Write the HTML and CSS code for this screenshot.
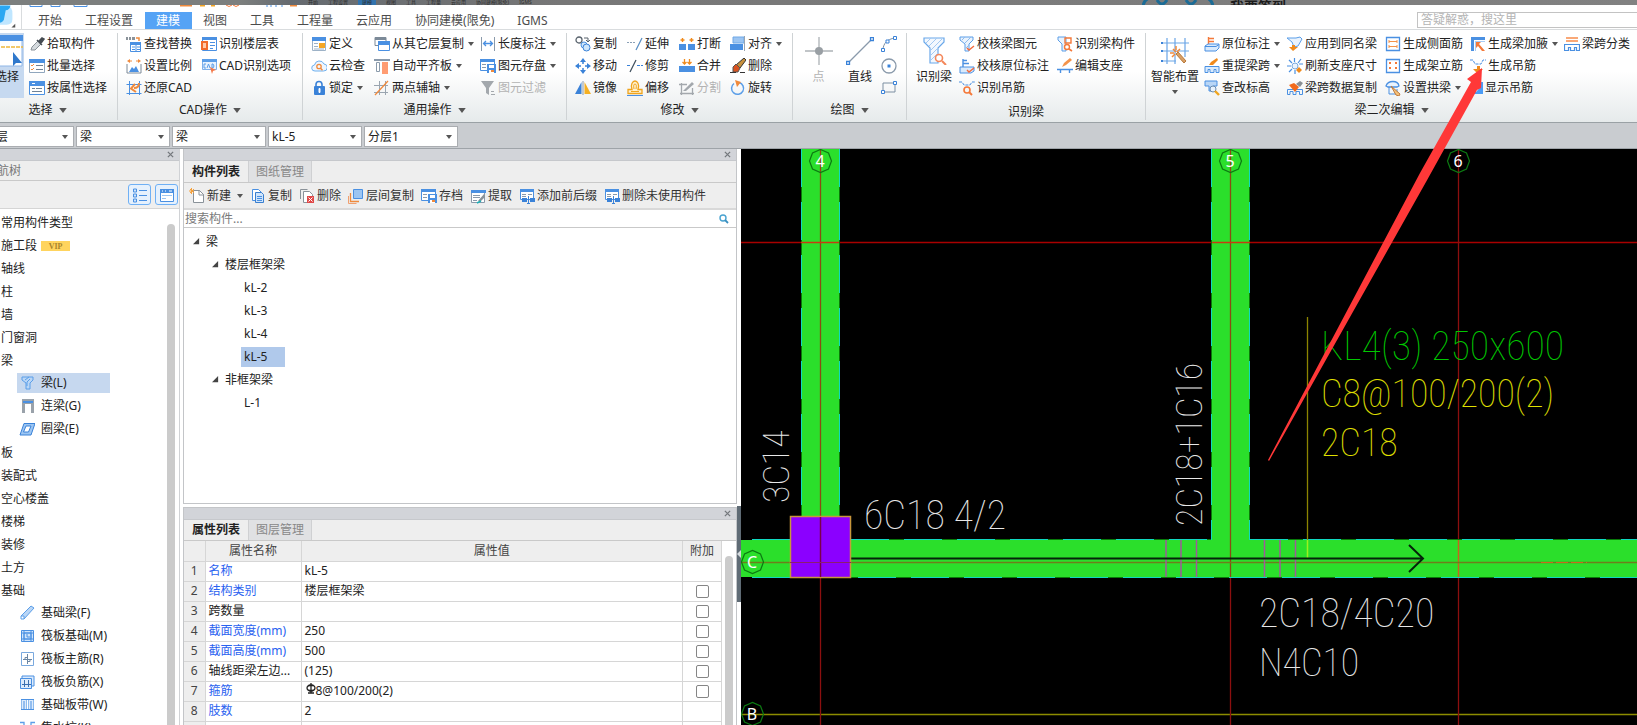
FILE: index.html
```html
<!DOCTYPE html>
<html lang="zh-CN">
<head>
<meta charset="utf-8">
<title>建模</title>
<link rel="stylesheet" href="styles.css">
</head>
<body>
<svg class="defs" aria-hidden="true">
  <defs>
    <symbol id="pick" viewBox="0 0 16 16"><path d="M2 14l1-3 6-6 3 3-6 6z" fill="#d5dade" stroke="#8a9299"/><path d="M8 4l5 5M10 5l3-3 2 1-3 4z" fill="#444b52" stroke="#444b52" stroke-width="1.5"/></symbol>
    <symbol id="batch" viewBox="0 0 16 16"><path d="M.5 1.500h15v13H.5z" fill="#fff" stroke="#8fa6bd"/><path d="M0 1h16v4H0z" fill="#4a90e2"/><path d="M2 7l1 1 2-2M2 11l1 1 2-2" fill="none" stroke="#f08a3c"/><path d="M7 7.500h7M7 11.500h7" stroke="#6f8296"/></symbol>
    <symbol id="prop" viewBox="0 0 16 16"><path d="M.5 2.500h15v12H.5z" fill="#fff" stroke="#4a90e2"/><path d="M0 1h16v5H0z" fill="#4a90e2"/><path d="M3 3h3v1H3z" fill="#fff"/><path d="M3 8.500h3M7 8.500h6M3 11.500h10" stroke="#6f8296"/></symbol>
    <symbol id="find" viewBox="0 0 16 16"><path d="M0 1h9v3H0z" fill="#8a9299"/><path d="M2.500 1v3M5.500 1v3" stroke="#fff"/><path d="M10 2h3v3" fill="none" stroke="#f08a3c" stroke-width="1.500"/><path d="M4.500 7.500h10v8h-10z" fill="#fff" stroke="#4a90e2"/><path d="M4 6h11v3H4z" fill="#4a90e2"/><path d="M6 11h3M6 13.500h3M11 11h3M11 13.500h3M10 9v6" stroke="#4a90e2"/></symbol>
    <symbol id="scale" viewBox="0 0 16 16"><path d="M1 6v9h14V6" fill="#fff" stroke="#7c8a98"/><path d="M3 14l3-5 2 2 2-3 3 6z" fill="#4a90e2"/><path d="M4 1L1 3l3 2zM12 1l3 2-3 2z" fill="#f08a3c"/><path d="M3 3h3M10 3h3" stroke="#f08a3c"/></symbol>
    <symbol id="restore" viewBox="0 0 16 16"><path d="M.5 4.500h15M.5 13.500h15M3.500 1v14M13.500 1v14" stroke="#4a90e2" fill="none"/><path d="M13 3c0 4-2 5-5 5M9 4L5 8.500l5 3.500" fill="none" stroke="#f08a3c" stroke-width="2"/></symbol>
    <symbol id="floor" viewBox="0 0 16 16"><path d="M1.500 2.500h14v12h-14z" fill="#fff" stroke="#4a90e2"/><path d="M1 1h15v3H1z" fill="#4a90e2"/><path d="M0 5h7v9H0z" fill="#f26a2a"/><path d="M2 7h3v5H2z" fill="#ffc9a8"/><path d="M9 6.500h5M9 9.500h5M9 12.500h3" stroke="#4a90e2"/></symbol>
    <symbol id="cad" viewBox="0 0 16 16"><path d="M1.500 2.500h14v9h-14z" fill="#e9f2fd" stroke="#7fb0ea"/><path d="M1 1h15v3H1z" fill="#5b9ee8"/><path d="M5 6H3v4h2M6 10l1.500-4L9 10M11 6v4h1q2-2 0-4z" fill="none" stroke="#5b9ee8"/><path d="M9 9l6 3-3 1-1 3z" fill="#f4794a"/></symbol>
    <symbol id="define" viewBox="0 0 16 16"><path d="M1.500 2.500h13v12h-13z" fill="#fff" stroke="#9db2c7"/><path d="M1 1h14v4H1z" fill="#4a90e2"/><path d="M8 7h6v5H8z" fill="#f5a623"/><path d="M3 7.500h4M3 10.500h4M3 13h10" stroke="#9db2c7"/></symbol>
    <symbol id="cloud" viewBox="0 0 16 16"><path d="M4 13a3 3 0 0 1-.5-6A5 5 0 0 1 13 6a3.500 3.500 0 0 1-.5 7z" fill="#eef6ff" stroke="#6fb0ee"/><circle cx="8" cy="8.500" r="2.200" fill="none" stroke="#f08a3c" stroke-width="1.300"/><path d="M9.500 10.200l2 2" stroke="#f08a3c" stroke-width="1.500"/></symbol>
    <symbol id="lock" viewBox="0 0 16 16"><path d="M5 7V4.500a3 3 0 0 1 6 0V7" fill="none" stroke="#3a82d8" stroke-width="1.600"/><rect x="3" y="6" width="11" height="9" rx="1" fill="#3a82d8"/><path d="M8 8.500h1v4H8z" fill="#fff" stroke="#fff"/></symbol>
    <symbol id="layers" viewBox="0 0 16 16"><path d="M1 1.500h11v8H1z" fill="#fff" stroke="#7c8a98"/><path d="M1 1h11v3H1z" fill="#7c8a98"/><path d="M4.500 6.500h11v8h-11z" fill="#fff" stroke="#4a90e2"/><path d="M4 5h12v4H4z" fill="#4a90e2"/></symbol>
    <symbol id="level" viewBox="0 0 16 16"><path d="M0 1h16v2H0z" fill="#8a9aab"/><path d="M2.500 4.500h3v9h-3z" fill="#fff" stroke="#8a9aab"/><path d="M8 4h6v12H8z" fill="#ff9c72"/></symbol>
    <symbol id="axis" viewBox="0 0 16 16"><path d="M0 5.500h14M0 12.500h14M5.500 1v14M11.500 1v14" stroke="#9aa5b0" fill="none"/><path d="M1 15L14 1" stroke="#f08a3c" stroke-width="1.300"/></symbol>
    <symbol id="length" viewBox="0 0 16 16"><path d="M1.500 1v14M14.500 1v14" stroke="#8a9aab"/><path d="M4 7.500h8M6 5L3.500 7.500 6 10M10 5l2.500 2.500L10 10" stroke="#4a90e2" fill="none" stroke-width="1.300"/></symbol>
    <symbol id="save" viewBox="0 0 16 16"><path d="M.5 2.500h14v10H.5z" fill="#fff" stroke="#4a90e2"/><path d="M0 1h15v3H0z" fill="#4a90e2"/><path d="M2 6.500h4M2 9.500h4" stroke="#8a9aab"/><path d="M7 6h9v9H7z" fill="#4a90e2"/><path d="M9 7h5v3H9z" fill="#fff"/><path d="M9 12h5v3H9z" fill="#fff"/><path d="M11 12h3v2h-3z" fill="#f08a3c"/></symbol>
    <symbol id="filter" viewBox="0 0 16 16"><path d="M1 1h13L9 8v7l-3-2V8z" fill="#a3a8ad"/><path d="M11 11.500h3M11 14.500h4" stroke="#a3a8ad"/></symbol>
    <symbol id="copy" viewBox="0 0 16 16"><circle cx="4" cy="4" r="3" fill="none" stroke="#59636d" stroke-width="1.300"/><path d="M9 2h4v4M11 4l2 2 2-2" fill="none" stroke="#59636d"/><circle cx="9" cy="9" r="3" fill="#cfe6fb" stroke="#4a90e2"/><circle cx="11.500" cy="11.500" r="3.500" fill="#cfe6fb" stroke="#3a82d8"/></symbol>
    <symbol id="move" viewBox="0 0 16 16"><path d="M8 0l3 4H5zM8 16l3-4H5zM0 8l4-3v6zM16 8l-4-3v6z" fill="#3a82d8"/><path d="M8 4v2M8 10v2M4 8h2M10 8h2" stroke="#3a82d8" stroke-width="1.500"/></symbol>
    <symbol id="mirror" viewBox="0 0 16 16"><path d="M6.500 2v12H0z" fill="#3a82d8"/><path d="M9.500 2v12H16z" fill="#f5b023"/><path d="M8 1v14" stroke="#8a9aab"/></symbol>
    <symbol id="extend" viewBox="0 0 16 16"><path d="M0 6.500h9" stroke="#8aa0b6" stroke-dasharray="2 1"/><path d="M9 14l6-12" stroke="#5b8fc4" stroke-width="1.300"/></symbol>
    <symbol id="trim" viewBox="0 0 16 16"><path d="M0 7.500h4M10 7.500h6" stroke="#3a82d8" stroke-dasharray="3 1"/><path d="M3 14L9 2" stroke="#41505e" stroke-width="1.300"/></symbol>
    <symbol id="offset" viewBox="0 0 16 16"><path d="M1 13.500v-4h4C3 4 6 1 8 1s5 3 3 8.500h4v4z" fill="#fff1cf" stroke="#f0a51e" stroke-width="1.300"/><path d="M4 11.500h8M7 9q-1-5 1-5t1 5" fill="none" stroke="#f0a51e"/><path d="M0 15.500h16" stroke="#4a90e2"/></symbol>
    <symbol id="break" viewBox="0 0 16 16"><path d="M0 8h7v6H0zM9 8h7v6H9z" fill="#4a90e2"/><path d="M3.500 6V2M1.500 4h4M12.500 6V2M10.500 4h4" stroke="#f08a1c" stroke-width="1.400"/></symbol>
    <symbol id="merge" viewBox="0 0 16 16"><path d="M0 8h16v6H0z" fill="#4a90e2"/><path d="M5.500 1v5M3.500 4l2 2 2-2M10.500 1v5M8.500 4l2 2 2-2" stroke="#f08a1c" stroke-width="1.300" fill="none"/></symbol>
    <symbol id="split" viewBox="0 0 16 16"><path d="M0 4.500h8M1 13.500h14M2.500 3v12M13.500 8v7" stroke="#a3a8ad" stroke-width="1.300"/><path d="M4 11L13 2l2 2-8 7z" fill="#a3a8ad"/></symbol>
    <symbol id="align" viewBox="0 0 16 16"><path d="M3 1h11v6H3z" fill="#9cc5f2" stroke="#6fa8e6"/><path d="M0 8h13v6H0z" fill="#4a90e2"/><path d="M14.500 0v15" stroke="#9aa5b0"/></symbol>
    <symbol id="erase" viewBox="0 0 16 16"><path d="M14 0l2 2-6 8-4-3z" fill="#c8903c" stroke="#333"/><path d="M6 6l4 4-2 4-5 0 0-5z" fill="#d8521e" stroke="#555"/><path d="M0 14.500h6M10 14.500h5" stroke="#333"/></symbol>
    <symbol id="rotate" viewBox="0 0 16 16"><path d="M9 2.500a6 6 0 1 1-5 1" fill="none" stroke="#5b9ee8" stroke-width="1.500"/><path d="M5 0l6 2-4 5z" fill="#f08a3c"/></symbol>
    <symbol id="point" viewBox="0 0 28 28"><path d="M0 14h28M14 0v28" stroke="#adb2b6" stroke-width="1.300"/><circle cx="14" cy="14" r="4" fill="#999fa4"/></symbol>
    <symbol id="line" viewBox="0 0 28 28"><path d="M2 26L26 2" stroke="#8a9aab" stroke-width="1.300"/><path d="M.5 24.500h3v3h-3zM24.500.5h3v3h-3z" fill="#fff" stroke="#3a82d8" stroke-width="1.300"/></symbol>
    <symbol id="arc" viewBox="0 0 16 16"><path d="M2 14C2 8 6 3 14 2" fill="none" stroke="#7c8fa2"/><path d="M.5 12.500h3v3h-3zM5 4h3v3H5zM12.500.5h3v3h-3z" fill="#fff" stroke="#3a82d8"/></symbol>
    <symbol id="circle" viewBox="0 0 16 16"><circle cx="8" cy="8" r="7" fill="none" stroke="#8a9aab" stroke-width="1.300"/><path d="M6.500 6.500h3v3h-3z" fill="#3a82d8"/></symbol>
    <symbol id="rect" viewBox="0 0 16 16"><path d="M2 3h12v9H2z" fill="none" stroke="#7c8fa2"/><path d="M.5 10.500h3v3h-3zM12.500 1.500h3v3h-3z" fill="#fff" stroke="#3a82d8"/></symbol>
    <symbol id="beam" viewBox="0 0 28 28"><path d="M4 1h20v4l-6 6v15h-8V11L4 5z" fill="#f3f8fe" stroke="#6aa8ea" stroke-width="1.200"/><path d="M6 6l5-5M9 9l8-8M11 13L22 2M11 18l7-7M11 23l7-7" stroke="#a3c9f2"/><circle cx="19" cy="21" r="3.500" fill="#fff" stroke="#f4875a" stroke-width="1.600"/><path d="M22 24l4 4" stroke="#f4875a" stroke-width="2"/></symbol>
    <symbol id="beamcheck" viewBox="0 0 16 16"><path d="M1 1h13v3l-4 4v7H6V8L1 4z" fill="#eaf3fd" stroke="#5b9ee8"/><path d="M3 4l3-3M6 7l6-6M7 12l3-3" stroke="#8dbbee"/><path d="M8 12l2 2 5-4" fill="none" stroke="#f4693a" stroke-width="1.400"/></symbol>
    <symbol id="notecheck" viewBox="0 0 16 16"><path d="M4 1v8M4 2.500h4M4 5.500h6" stroke="#4a90e2" stroke-width="1.400"/><path d="M1 9h9l5 0v4l-3 2H1z" fill="#d9eafc" stroke="#4a90e2"/><path d="M8 12l2 2 5-4" fill="none" stroke="#f4693a" stroke-width="1.400"/></symbol>
    <symbol id="hangfind" viewBox="0 0 16 16"><path d="M0 2h3l2 3h6l2-3h3" fill="none" stroke="#4a90e2" stroke-dasharray="3 1"/><circle cx="8" cy="10" r="3" fill="none" stroke="#f4793a" stroke-width="1.600"/><path d="M10 12l3 3" stroke="#f4793a" stroke-width="2"/></symbol>
    <symbol id="beampart" viewBox="0 0 16 16"><path d="M1 1h8v14H5V8L1 4z" fill="#eaf3fd" stroke="#5b9ee8"/><path d="M8 2h6v5H8z" fill="none" stroke="#f4793a" stroke-width="1.400"/><circle cx="10" cy="11" r="2.500" fill="#fff" stroke="#f4793a" stroke-width="1.400"/><path d="M12 13l3 2" stroke="#f4793a" stroke-width="1.600"/></symbol>
    <symbol id="support" viewBox="0 0 16 16"><path d="M0 11.500h16M3.500 11v4M12.500 11v4" stroke="#4a90e2" stroke-width="1.400"/><path d="M5 9l2-4 6-5 2 2-6 5z" fill="#f4934a"/></symbol>
    <symbol id="smart" viewBox="0 0 28 28"><path d="M1 6h27M1 14h27M1 24h14M6 1v26M14 1v26M24 1v19" stroke="#6aa5e6" stroke-width="1.200"/><path d="M0 5h2v2H0zM0 13h2v2H0zM0 23h2v2H0z" fill="#3a82d8"/><path d="M12 12l3 3M15 9v4M9 16h4M11 20l3-3M19 12l-3 3" stroke="#f08a3c" stroke-width="1.500"/><path d="M15 17l2-2 8 9-2 2z" fill="#d9a066" stroke="#b87a3c"/></symbol>
    <symbol id="note" viewBox="0 0 16 16"><path d="M4.500 1v9M5 2.500h5M5 5.500h5" stroke="#f4793a" stroke-width="1.400"/><path d="M1 10l3-2h11v4l-3 3H1z" fill="#d9eafc" stroke="#4a90e2"/><path d="M1 10.500h11l3-2" fill="none" stroke="#4a90e2"/></symbol>
    <symbol id="respan" viewBox="0 0 16 16"><path d="M1 8.500h14v6h-3v-3h-2v3H6v-3H4v3H1z" fill="#d9eafc" stroke="#4a90e2"/><path d="M5 7l2-3 6-4 1 2-5 5z" fill="#f08a1c"/></symbol>
    <symbol id="height" viewBox="0 0 16 16"><path d="M1 1h12v5H9v5H5V6H1z" fill="#b9d6f6" stroke="#4a90e2"/><circle cx="9" cy="9" r="3" fill="#e8f2fd" stroke="#6b8db0"/><path d="M11 11l4 4" stroke="#f0a51e" stroke-width="2.400"/></symbol>
    <symbol id="apply" viewBox="0 0 16 16"><path d="M0 2h9l4-1 2 2-4 7-4 1-2-5z" fill="#eaf3fd" stroke="#5b9ee8"/><path d="M5 9h3v2h3l-5 4-4-4h3z" fill="#f08a1c"/></symbol>
    <symbol id="refresh" viewBox="0 0 16 16"><path d="M7.500 0v4M8 12v4M0 8h4M12 6h4M2 2l3 3M14 1l-3 4M2 14l3-3" stroke="#4a90e2" stroke-width="1.200"/><circle cx="8" cy="8" r="3" fill="#eaf3fd" stroke="#7aa9de"/><path d="M12 9l3 3-3 3-3-3z" fill="#f08a1c"/></symbol>
    <symbol id="spancopy" viewBox="0 0 16 16"><path d="M.5 9.500h15v5h-3v-3H9v3H6v-3H3v3H.5z" fill="none" stroke="#4a90e2"/><path d="M9 4l4-3 3 2-3 4z" fill="#8a8f94"/><path d="M2 5l5-2 5 4-4 5z" fill="#f26a1c"/></symbol>
    <symbol id="side" viewBox="0 0 16 16"><path d="M1.500 1.500h13v13h-13z" fill="#fff" stroke="#4a90e2" stroke-width="1.300"/><path d="M4 5.500h8M4 10.500h8M4 4v3M12 4v3M4 9v3M12 9v3" stroke="#f4934a"/></symbol>
    <symbol id="frame" viewBox="0 0 16 16"><path d="M1.500 1.500h13v13h-13z" fill="#fff" stroke="#4a90e2" stroke-width="1.300"/><path d="M4 4h2v2H4zM10 4h2v2h-2zM4 9h2v2H4zM10 9h2v2h-2z" fill="#f4793a"/></symbol>
    <symbol id="arch" viewBox="0 0 16 16"><path d="M1 6c2-6 12-6 13 0l-2 1H3z" fill="#eaf3fd" stroke="#4a90e2" stroke-width="1.300"/><path d="M4 7v7h8V9" fill="none" stroke="#4a90e2"/><path d="M6 6l9 8-1 2-3-1z" fill="#f4c27a" stroke="#c07a3c"/></symbol>
    <symbol id="haunch" viewBox="0 0 16 16"><path d="M1 1h14v3H4v11H1z" fill="#4a90e2"/><path d="M6 6h5L9 8l6 7h-3L8 10l-2 2z" fill="#f4793a"/><path d="M5.500 5v10M5 5.500h10" stroke="#a9cdf4"/></symbol>
    <symbol id="hang" viewBox="0 0 16 16"><path d="M0 2h3l2 4h6l2-4h3" fill="none" stroke="#4a90e2" stroke-dasharray="3 1"/><path d="M7 8h3v3h3l-5 5-5-5h4z" fill="#f08a1c"/></symbol>
    <symbol id="show" viewBox="0 0 16 16"><path d="M0 0h16v16H0z" fill="#4a9bf5"/><path d="M4 9l3 3 6-7" fill="none" stroke="#fff" stroke-width="1.500"/></symbol>
    <symbol id="classify" viewBox="0 0 16 16"><path d="M2 1h12v2H2zM2 4h12v2H2z" fill="#f9a877"/><path d="M0 8.500h15.500v6h-3v-3h-2v3h-4v-3h-2v3H.5v-6" fill="none" stroke="#4a90e2" stroke-width="1.200"/></symbol>
    <symbol id="new" viewBox="0 0 16 16"><path d="M4.500 2.500h6l4 4v8h-10z" fill="#fff" stroke="#8a9299"/><path d="M10 2v5h5" fill="none" stroke="#8a9299"/><path d="M2.500 0v6M0 3h5M1 1l4 4M5 1L1 5" stroke="#f5a13c"/></symbol>
    <symbol id="pages" viewBox="0 0 16 16"><path d="M2.500 1.500h6l3 3v8h-9z" fill="#fff" stroke="#4a90e2"/><path d="M5.500 4.500h6l2 2v8h-8z" fill="#cfe4fb" stroke="#3a7fcf"/><path d="M7 8.500h5M7 10.500h5M7 12.500h5" stroke="#4a90e2"/></symbol>
    <symbol id="pagedel" viewBox="0 0 16 16"><path d="M1.500 11V1.500h7" fill="none" stroke="#8a9299"/><path d="M4.500 3.500h6l3 3v8h-9z" fill="#fff" stroke="#8a9299"/><path d="M8 8h7v7H8z" fill="#e04848"/><path d="M9.500 9.500l4 4M13.500 9.500l-4 4" stroke="#fff"/></symbol>
    <symbol id="floorcopy" viewBox="0 0 16 16"><path d="M2.500 5v8.500H11" fill="none" stroke="#f08a3c" stroke-width="1.300"/><path d="M.5 8v7.500h8" fill="none" stroke="#f0a070"/><path d="M5.500 1.500h9v9h-9z" fill="#9cc5f2" stroke="#4a90e2"/></symbol>
    <symbol id="extract" viewBox="0 0 16 16"><path d="M1.500 3.500h13v11h-13z" fill="#fff" stroke="#8a9aab"/><path d="M1 2h15v3H1z" fill="#4a90e2"/><path d="M3 7.500h7M3 9.500h7M3 12.500h4" stroke="#8a9aab"/><path d="M8 13l6-7 1 3-5 5z" fill="#8a9299"/><path d="M7 15l4-2" stroke="#1fb0b8" stroke-width="1.500"/></symbol>
    <symbol id="affix" viewBox="0 0 16 16"><path d="M1.500 2.500h13v9h-13z" fill="#fff" stroke="#4a90e2"/><path d="M1 1h14v3H1z" fill="#4a90e2"/><path d="M3 6.500h4M9 6.500h4M3 8.500h4" stroke="#8a9aab"/><path d="M3 10h5v4H3zM11 10h5v4h-5z" fill="#3a82d8"/><path d="M9.500 8v7M8 15.500h3" stroke="#3a82d8"/></symbol>
    <symbol id="tbeam" viewBox="0 0 16 16"><path d="M3 2h11v3l-3 3v6H7V8L3 5z" fill="#b9d6f6" stroke="#5b9ee8"/><path d="M6 5l4-3M8 11V7l3-3" stroke="#5b9ee8" fill="none"/></symbol>
    <symbol id="tlink" viewBox="0 0 16 16"><path d="M3 1h12v14h-3V6H6v9H3z" fill="#9aa2aa"/><path d="M4 3h10v2H4z" fill="#4a90e2"/></symbol>
    <symbol id="tring" viewBox="0 0 16 16"><path d="M5 2.500h11L12 14H1z" fill="#9cc5f2" stroke="#3a82d8"/><path d="M7 5h5l-2.500 6H4.500z" fill="#fff" stroke="#3a82d8"/></symbol>
    <symbol id="tfound" viewBox="0 0 16 16"><path d="M2 11L12 1l3 2L5 14z" fill="#b9d6f6" stroke="#5b9ee8"/><path d="M2 11h3v3H2z" fill="#fff" stroke="#5b9ee8"/></symbol>
    <symbol id="traft" viewBox="0 0 16 16"><path d="M2.500 2.500h12v11h-12z" fill="#cfe4fb" stroke="#4a90e2"/><path d="M5 5h7v6H5zM5 2v12M12 2v12M2 5h13M2 11h13M8 6v3h3" fill="none" stroke="#4a90e2"/></symbol>
    <symbol id="tmain" viewBox="0 0 16 16"><path d="M2.500 1.500h12v13h-12z" fill="#fff" stroke="#7aa9de"/><path d="M8.500 3v10M4 8.500h9M6 8.500v-2h2M11 8.500v2H9" fill="none" stroke="#6b86a3"/></symbol>
    <symbol id="tneg" viewBox="0 0 16 16"><path d="M1.500 4.500h11v10h-11zM3 4V2h12v10h-2" fill="#dcebfc" stroke="#4a90e2"/><path d="M5.500 6v7M9.500 6v7M3 10.500h9" stroke="#3a6fb0"/></symbol>
    <symbol id="tband" viewBox="0 0 16 16"><path d="M2.500 2.500h5v10h-5zM9.500 2.500h5v10h-5z" fill="#dcebfc" stroke="#8dbbee"/><path d="M2 2.500h13M2 12.500h13M5 4v8M12 4v8" stroke="#4a90e2"/></symbol>
    <symbol id="tpit" viewBox="0 0 16 16"><path d="M1 2.500h4v10h7v-10h4" fill="none" stroke="#5b9ee8" stroke-width="1.300"/></symbol>
    <symbol id="sel" viewBox="0 0 32 32"><path d="M0 1h31v30H0z" fill="#fff" stroke="#8fb6e6"/><path d="M0 0h32v6H0z" fill="#4a90e2"/><path d="M0 12h32" stroke="#f0b83c" stroke-width="1.500" stroke-dasharray="4 1"/><path d="M22 17v14l3-3 6 0z" fill="#2f78cc"/></symbol>
    <symbol id="caret" viewBox="0 0 6 4"><path d="M0 0h6L3 4z" fill="#555"/></symbol>
    <symbol id="close" viewBox="0 0 8 8"><path d="M1 1l6 6M7 1L1 7" stroke="#74787c" stroke-width="1.500"/></symbol>
    <symbol id="twist" viewBox="0 0 8 8"><path d="M7 0v7H0z" fill="#444"/></symbol>
    <symbol id="mag" viewBox="0 0 10 10"><circle cx="4" cy="4" r="3" fill="none" stroke="#4aa3d0" stroke-width="1.400"/><path d="M6 6l3 3" stroke="#3a8fc0" stroke-width="1.800"/></symbol>
  </defs>
</svg>

<div class="app">
  <div class="backdrop" aria-hidden="true">
    <div class="ghost-tabs"><span>开始</span><span>工程设置</span><span class="ghost-on">建模</span><span>视图</span><span>工具</span><span>工程量</span><span>云应用</span><span>协同建模(限免)</span><span>IGMS</span></div>
    <svg class="ghost-face" viewBox="0 0 72 6"><path d="M1 6q1-6 6-8M71 6q-1-6-6-8" fill="none" stroke="#1c6c96" stroke-width="3"/><path d="M15 0q5 8 10 0M44 0q5 8 10 0" fill="none" stroke="#1c6c96" stroke-width="3"/></svg>
    <span class="ghost-sign">我要签到</span>
  </div>

  <header class="menubar">
    <svg class="logo" viewBox="0 0 22 25" aria-hidden="true"><path d="M0 0h8q5 2 5 8v6q0 6-6 6H0z" fill="#bfe6ff"/><path d="M0 0h11q-1 5-5 5l-2 10q-2 3-4 3z" fill="#2aa7f2"/><path d="M16 19v4h-4z" fill="#555"/></svg>
    <nav class="tabs">
      <button>开始</button><button>工程设置</button><button class="on">建模</button><button>视图</button><button>工具</button><button>工程量</button><button>云应用</button><button>协同建模(限免)</button><button>IGMS</button>
    </nav>
    <svg class="quick" viewBox="0 0 300 3" aria-hidden="true"><path d="M8 0v1.500h12V0M29 0v1.500h9V0M52 0v1.500h13V0" fill="none" stroke="#4a90e2"/><path d="M158 .5h12" stroke="#f08a3c" stroke-width="2"/><path d="M178 .5h5M189 .5h4" stroke="#f5a623" stroke-width="2"/><path d="M204 0q3 3 6 0M211 0q3 3 6 0" fill="none" stroke="#f4793a"/><path d="M245 0v2M249 0v2M254 0v2M260 0v2" stroke="#4a90e2"/><path d="M268 .5h7" stroke="#f08a3c" stroke-width="2"/></svg>
    <input class="ask" type="text" placeholder="答疑解惑，搜这里" aria-label="答疑解惑">
  </header>

  <section class="ribbon">
    <div class="group g-select">
      <div class="tools">
        <button class="big active"><svg class="ic32"><use href="#sel"/></svg>选择</button>
        <div class="col">
          <button><svg class="ic"><use href="#pick"/></svg>拾取构件</button>
          <button><svg class="ic"><use href="#batch"/></svg>批量选择</button>
          <button><svg class="ic"><use href="#prop"/></svg>按属性选择</button>
        </div>
      </div>
      <div class="caption">选择<svg class="car"><use href="#caret"/></svg></div>
    </div>
    <div class="group g-cad">
      <div class="tools">
        <div class="col">
          <button><svg class="ic"><use href="#find"/></svg>查找替换</button>
          <button><svg class="ic"><use href="#scale"/></svg>设置比例</button>
          <button><svg class="ic"><use href="#restore"/></svg>还原CAD</button>
        </div>
        <div class="col">
          <button><svg class="ic"><use href="#floor"/></svg>识别楼层表</button>
          <button><svg class="ic"><use href="#cad"/></svg>CAD识别选项</button>
        </div>
      </div>
      <div class="caption">CAD操作<svg class="car"><use href="#caret"/></svg></div>
    </div>
    <div class="group g-common">
      <div class="tools">
        <div class="col">
          <button><svg class="ic"><use href="#define"/></svg>定义</button>
          <button><svg class="ic"><use href="#cloud"/></svg>云检查</button>
          <button><svg class="ic"><use href="#lock"/></svg>锁定<svg class="car"><use href="#caret"/></svg></button>
        </div>
        <div class="col">
          <button><svg class="ic"><use href="#layers"/></svg>从其它层复制<svg class="car"><use href="#caret"/></svg></button>
          <button><svg class="ic"><use href="#level"/></svg>自动平齐板<svg class="car"><use href="#caret"/></svg></button>
          <button><svg class="ic"><use href="#axis"/></svg>两点辅轴<svg class="car"><use href="#caret"/></svg></button>
        </div>
        <div class="col">
          <button><svg class="ic"><use href="#length"/></svg>长度标注<svg class="car"><use href="#caret"/></svg></button>
          <button><svg class="ic"><use href="#save"/></svg>图元存盘<svg class="car"><use href="#caret"/></svg></button>
          <button disabled><svg class="ic"><use href="#filter"/></svg>图元过滤</button>
        </div>
      </div>
      <div class="caption">通用操作<svg class="car"><use href="#caret"/></svg></div>
    </div>
    <div class="group g-modify">
      <div class="tools">
        <div class="col">
          <button><svg class="ic"><use href="#copy"/></svg>复制</button>
          <button><svg class="ic"><use href="#move"/></svg>移动</button>
          <button><svg class="ic"><use href="#mirror"/></svg>镜像</button>
        </div>
        <div class="col">
          <button><svg class="ic"><use href="#extend"/></svg>延伸</button>
          <button><svg class="ic"><use href="#trim"/></svg>修剪</button>
          <button><svg class="ic"><use href="#offset"/></svg>偏移</button>
        </div>
        <div class="col">
          <button><svg class="ic"><use href="#break"/></svg>打断</button>
          <button><svg class="ic"><use href="#merge"/></svg>合并</button>
          <button disabled><svg class="ic"><use href="#split"/></svg>分割</button>
        </div>
        <div class="col">
          <button><svg class="ic"><use href="#align"/></svg>对齐<svg class="car"><use href="#caret"/></svg></button>
          <button><svg class="ic"><use href="#erase"/></svg>删除</button>
          <button><svg class="ic"><use href="#rotate"/></svg>旋转</button>
        </div>
      </div>
      <div class="caption">修改<svg class="car"><use href="#caret"/></svg></div>
    </div>
    <div class="group g-draw">
      <div class="tools">
        <button class="big" disabled><svg class="ic28"><use href="#point"/></svg>点</button>
        <button class="big"><svg class="ic28"><use href="#line"/></svg>直线</button>
        <div class="col">
          <button aria-label="弧线"><svg class="ic"><use href="#arc"/></svg></button>
          <button aria-label="圆"><svg class="ic"><use href="#circle"/></svg></button>
          <button aria-label="矩形"><svg class="ic"><use href="#rect"/></svg></button>
        </div>
      </div>
      <div class="caption">绘图<svg class="car"><use href="#caret"/></svg></div>
    </div>
    <div class="group g-ident">
      <div class="tools">
        <button class="big"><svg class="ic28"><use href="#beam"/></svg>识别梁</button>
        <div class="col">
          <button><svg class="ic"><use href="#beamcheck"/></svg>校核梁图元</button>
          <button><svg class="ic"><use href="#notecheck"/></svg>校核原位标注</button>
          <button><svg class="ic"><use href="#hangfind"/></svg>识别吊筋</button>
        </div>
        <div class="col">
          <button><svg class="ic"><use href="#beampart"/></svg>识别梁构件</button>
          <button><svg class="ic"><use href="#support"/></svg>编辑支座</button>
        </div>
      </div>
      <div class="caption">识别梁</div>
    </div>
    <div class="group g-second">
      <div class="tools">
        <button class="big"><svg class="ic28"><use href="#smart"/></svg>智能布置<svg class="car"><use href="#caret"/></svg></button>
        <div class="col">
          <button><svg class="ic"><use href="#note"/></svg>原位标注<svg class="car"><use href="#caret"/></svg></button>
          <button><svg class="ic"><use href="#respan"/></svg>重提梁跨<svg class="car"><use href="#caret"/></svg></button>
          <button><svg class="ic"><use href="#height"/></svg>查改标高</button>
        </div>
        <div class="col">
          <button><svg class="ic"><use href="#apply"/></svg>应用到同名梁</button>
          <button><svg class="ic"><use href="#refresh"/></svg>刷新支座尺寸</button>
          <button><svg class="ic"><use href="#spancopy"/></svg>梁跨数据复制</button>
        </div>
        <div class="col">
          <button><svg class="ic"><use href="#side"/></svg>生成侧面筋</button>
          <button><svg class="ic"><use href="#frame"/></svg>生成架立筋</button>
          <button><svg class="ic"><use href="#arch"/></svg>设置拱梁<svg class="car"><use href="#caret"/></svg></button>
        </div>
        <div class="col">
          <button><svg class="ic"><use href="#haunch"/></svg>生成梁加腋<svg class="car"><use href="#caret"/></svg></button>
          <button><svg class="ic"><use href="#hang"/></svg>生成吊筋</button>
          <button class="tick"><svg class="ic12"><use href="#show"/></svg>显示吊筋</button>
        </div>
        <div class="col">
          <button><svg class="ic"><use href="#classify"/></svg>梁跨分类</button>
        </div>
      </div>
      <div class="caption">梁二次编辑<svg class="car"><use href="#caret"/></svg></div>
    </div>
  </section>

  <section class="pickers">
    <label class="combo"><select aria-label="楼层"><option>首层</option></select></label>
    <label class="combo"><select aria-label="构件大类"><option>梁</option></select></label>
    <label class="combo"><select aria-label="构件类型"><option>梁</option></select></label>
    <label class="combo"><select aria-label="构件"><option>kL-5</option></select></label>
    <label class="combo"><select aria-label="分层"><option>分层1</option></select></label>
  </section>

  <main class="work">
    <aside class="nav">
      <div class="strip"><button aria-label="关闭"><svg class="x"><use href="#close"/></svg></button></div>
      <h2 class="navtitle"><span>导航树</span></h2>
      <div class="navtools">
        <button aria-label="列表视图"><svg viewBox="0 0 16 16"><path d="M1.500 2h3v3h-3zM1.500 7h3v3h-3zM1.500 12h3v3h-3z" fill="#cfe4fb" stroke="#4a90e2"/><path d="M7 3.500h8M7 8.500h8M7 13.500h8" stroke="#4a90e2"/></svg></button>
        <button aria-label="窗口视图"><svg viewBox="0 0 16 16"><path d="M1.500 2.500h13v12h-13z" fill="#fff" stroke="#4a90e2"/><path d="M1 2h14v4H1z" fill="#4a90e2"/><path d="M3 4h1M6 4h1M10 4h3" stroke="#fff"/><path d="M3 8.500h10M3 11.500h4" stroke="#9cc5f2"/></svg></button>
      </div>
      <div class="navbody">
        <ul class="cats">
          <li>常用构件类型</li>
          <li>施工段<span class="vip">VIP</span></li>
          <li>轴线</li><li>柱</li><li>墙</li><li>门窗洞</li><li>梁</li>
          <li class="sub on"><svg class="ic"><use href="#tbeam"/></svg>梁(L)</li>
          <li class="sub"><svg class="ic"><use href="#tlink"/></svg>连梁(G)</li>
          <li class="sub"><svg class="ic"><use href="#tring"/></svg>圈梁(E)</li>
          <li>板</li><li>装配式</li><li>空心楼盖</li><li>楼梯</li><li>装修</li><li>土方</li><li>基础</li>
          <li class="sub"><svg class="ic"><use href="#tfound"/></svg>基础梁(F)</li>
          <li class="sub"><svg class="ic"><use href="#traft"/></svg>筏板基础(M)</li>
          <li class="sub"><svg class="ic"><use href="#tmain"/></svg>筏板主筋(R)</li>
          <li class="sub"><svg class="ic"><use href="#tneg"/></svg>筏板负筋(X)</li>
          <li class="sub"><svg class="ic"><use href="#tband"/></svg>基础板带(W)</li>
          <li class="sub"><svg class="ic"><use href="#tpit"/></svg>集水坑(K)</li>
        </ul>
        <div class="track"><div class="thumb"></div></div>
      </div>
    </aside>

    <div class="side">
      <section class="parts">
        <div class="strip"><button aria-label="关闭"><svg class="x"><use href="#close"/></svg></button></div>
        <div class="ptabs"><button class="on">构件列表</button><button>图纸管理</button></div>
        <div class="ptools">
          <button><svg class="ic"><use href="#new"/></svg>新建<svg class="car"><use href="#caret"/></svg></button>
          <button><svg class="ic"><use href="#pages"/></svg>复制</button>
          <button><svg class="ic"><use href="#pagedel"/></svg>删除</button>
          <button><svg class="ic"><use href="#floorcopy"/></svg>层间复制</button>
          <button><svg class="ic"><use href="#save"/></svg>存档</button>
          <button><svg class="ic"><use href="#extract"/></svg>提取</button>
          <button><svg class="ic"><use href="#affix"/></svg>添加前后缀</button>
          <button><svg class="ic"><use href="#affix"/></svg>删除未使用构件</button>
        </div>
        <div class="search"><input type="text" placeholder="搜索构件..." aria-label="搜索构件"><svg class="magic"><use href="#mag"/></svg></div>
        <ul class="tree">
          <li><svg class="tw"><use href="#twist"/></svg>梁</li>
          <li class="l2"><svg class="tw"><use href="#twist"/></svg>楼层框架梁</li>
          <li class="l3"><span>kL-2</span></li>
          <li class="l3"><span>kL-3</span></li>
          <li class="l3"><span>kL-4</span></li>
          <li class="l3"><span class="on">kL-5</span></li>
          <li class="l2"><svg class="tw"><use href="#twist"/></svg>非框架梁</li>
          <li class="l3"><span>L-1</span></li>
        </ul>
      </section>
      <section class="props">
        <div class="strip"><button aria-label="关闭"><svg class="x"><use href="#close"/></svg></button></div>
        <div class="ptabs"><button class="on">属性列表</button><button>图层管理</button></div>
        <div class="gridwrap">
          <table>
            <colgroup><col class="c-no"><col class="c-name"><col><col class="c-add"></colgroup>
            <thead><tr><th></th><th>属性名称</th><th>属性值</th><th>附加</th></tr></thead>
            <tbody>
              <tr><th>1</th><td class="key">名称</td><td>kL-5</td><td></td></tr>
              <tr><th>2</th><td class="key">结构类别</td><td>楼层框架梁</td><td class="ck"><input type="checkbox" aria-label="附加 结构类别"></td></tr>
              <tr><th>3</th><td>跨数量</td><td></td><td class="ck"><input type="checkbox" aria-label="附加 跨数量"></td></tr>
              <tr><th>4</th><td class="key">截面宽度(mm)</td><td>250</td><td class="ck"><input type="checkbox" aria-label="附加 截面宽度"></td></tr>
              <tr><th>5</th><td class="key">截面高度(mm)</td><td>500</td><td class="ck"><input type="checkbox" aria-label="附加 截面高度"></td></tr>
              <tr><th>6</th><td>轴线距梁左边...</td><td>(125)</td><td class="ck"><input type="checkbox" aria-label="附加 轴线距梁左边"></td></tr>
              <tr><th>7</th><td class="key">箍筋</td><td><svg class="rebar" viewBox="0 0 10 12"><ellipse cx="5" cy="5" rx="4" ry="3" fill="none" stroke="#222" stroke-width="1.300"/><path d="M5 0v10M2 10h6M2.500 2.500h5M3 7.500h4" stroke="#222" stroke-width="1.300"/></svg>8@100/200(2)</td><td class="ck"><input type="checkbox" aria-label="附加 箍筋"></td></tr>
              <tr><th>8</th><td class="key">肢数</td><td>2</td><td></td></tr>
              <tr><th>9</th><td></td><td></td><td></td></tr>
            </tbody>
          </table>
          <div class="track"><div class="thumb"></div></div>
        </div>
      </section>
    </div>

    <div class="gutter"><button aria-label="收起面板"><svg viewBox="0 0 4 8"><path d="M4 0v8L0 4z" fill="#d5dade"/></svg></button></div>

    <svg class="canvas" viewBox="741 149 896 576" preserveAspectRatio="xMinYMin slice">
      <path d="M741 242.500h896" stroke="#a80000" stroke-width="1.500"/>
      <path d="M741 714.500h896" stroke="#8c8c00" stroke-width="1.500"/>
      <path d="M820.500 149v576M1230.500 149v576M1458.500 149v576" stroke="#8c0f0f" stroke-width="1.300"/>
      <path d="M801 149h38v391h-38zM1212 149h38v391h-38zM741 540h896v37H741z" fill="#2bdf2b"/>
      <path d="M801.500 149v368M839.500 149v368M1211.500 149v391M1249.500 149v391M1250 539.500h387M851 539.500h361M752 539.500h38M752 577.500h885" fill="none" stroke="#087a08"/>
      <path d="M801.500 149v368M839.500 149v368M1211.500 149v391M1249.500 149v391M1250 539.500h387M851 539.500h361M752 539.500h38M752 577.500h885" fill="none" stroke="#10d8c0" stroke-dasharray="38 15"/>
      <path d="M820.500 149v400M1230.500 149v428" stroke="#8c4a14" stroke-width="1.300"/>
      <path d="M801 242.500h38M1212 242.500h38" stroke="#c83c10" stroke-width="1.500"/>
      <path d="M1458.500 540v37" stroke="#c8641e" stroke-width="1.500"/>
      <path d="M741 562.500h896" stroke="#6f7d1c" stroke-width="1.500"/>
      <path d="M1541 562.500h46" stroke="#c86a1e" stroke-dasharray="12 3"/>
      <path d="M1166 540v37M1181 540v37M1196.500 540v37M1264.500 540v37M1280 540v37M1295.500 540v37" stroke="#a05a9c" stroke-width="1.500"/>
      <path d="M1307.500 317v223" stroke="#8c8400" stroke-width="1.300"/>
      <path d="M1307.500 540v18" stroke="#9cf01e" stroke-width="1.500"/>
      <path d="M851 558.500h572M1409 545l14 13.500-14 13.500" fill="none" stroke="#05230a" stroke-width="2"/>
      <path d="M790.500 516.500h60v61h-60z" fill="#8b00ff" stroke="#c8963c" stroke-width="1.500"/>
      <path d="M820.500 517v60" stroke="#7a004c" stroke-width="1.500"/><path d="M790 562.500h61" stroke="#8c1e6e"/>
      <g fill="none" stroke="#0c7a12" stroke-width="1.200">
        <path id="b" d="M809.500 161l3-8 8-3.500 8 3.500 3 8-3 8-8 3.500-8-3.500z"/>
        <use href="#b" x="410"/><use href="#b" x="638"/><use href="#b" x="-68" y="401"/><use href="#b" x="-68" y="553"/>
      </g>
      <g class="axis">
        <text x="820" y="167">4</text><text x="1230" y="167">5</text><text x="1458" y="167">6</text><text x="752" y="568">C</text><text x="752" y="720">B</text>
      </g>
      <g class="cadtext">
        <g fill="#00c800"><text x="1321" y="360">KL4(3) 250x600</text></g>
        <g class="mid" fill="#e0e000"><text x="1321" y="407">C8@100/200(2)</text><text x="1321" y="456">2C18</text></g>
        <g fill="#e8e8e8"><text x="1259" y="627">2C18/4C20</text><text class="mid" x="1259" y="676">N4C10</text><text x="864" y="529">6C18 4/2</text>
          <text class="small" transform="translate(789 503) rotate(-90)">3C14</text><text class="small" transform="translate(1202 526) rotate(-90)">2C18+1C16</text></g>
      </g>
    </svg>
  </main>

  <svg class="pointer" viewBox="0 0 220 400" aria-hidden="true"><path d="M0 394L152 107 203 16 199 13 214 2 213 22 209 24 158 116 1 395z" fill="#ff3838"/></svg>
</div>
</body>
</html>
```
FILE: styles.css
```css
* { box-sizing: border-box; }

body {
  margin: 0;
  font: 12px/16px "Noto Sans", "Noto Sans CJK SC", sans-serif;
  color: #222;
  background: #fff;
}

button, input, select {
  font: inherit;
  color: inherit;
  border: 0;
  background: none;
  padding: 0;
  margin: 0;
}

ul { list-style: none; margin: 0; padding: 0; }
svg { display: block; flex: none; }
.defs { position: absolute; width: 0; height: 0; }

.ic { width: 16px; height: 16px; }
.ic12 { width: 12px; height: 12px; }
.ic28 { width: 28px; height: 28px; }
.ic32 { width: 32px; height: 32px; }
.car { width: 6px; height: 4px; margin-left: 4px; }

.app {
  position: relative;
  display: flex;
  flex-direction: column;
  height: 100vh;
  overflow: hidden;
}

/* strip of the window behind */
.backdrop {
  position: relative;
  flex: none;
  height: 5px;
  overflow: hidden;
  background: linear-gradient(90deg, #7c7f7e 0 240px, #666b70 290px, #777 560px, #818181);
}
.ghost-tabs { position: absolute; left: 308px; top: 0; display: flex; gap: 10px; font-size: 5px; line-height: 5px; color: #2c2c2c; }
.ghost-on { background: #3273ad; padding: 0 4px; }
.ghost-face { position: absolute; left: 1142px; top: 0; width: 72px; height: 6px; }
.ghost-sign { position: absolute; left: 1230px; top: -1px; font-size: 14px; font-weight: 700; color: #1c1c1c; }

/* menu row */
.menubar { position: relative; flex: none; display: flex; height: 25px; border-bottom: 1px solid #d9dcde; }
.logo { width: 22px; height: 25px; border-right: 1px solid #d9dcde; }
.tabs { display: flex; padding: 7px 0 0 5px; }
.tabs button { height: 17px; padding: 0 12px 0 11px; color: #4c4c4c; white-space: nowrap; }
.tabs .on { background: #55a3f5; color: #fff; }
.quick { position: absolute; left: 22px; top: 0; width: 300px; height: 3px; }
.ask { margin: 7px 0 0 auto; width: 220px; height: 16px; padding: 0 3px; border: 1px solid #c3c3c3; border-right: 0; }
.ask::placeholder { color: #b4b4b4; }

/* ribbon */
.ribbon {
  flex: none;
  display: flex;
  height: 93px;
  padding: 3px 0 2px;
  border-bottom: 1px solid #9aa1a5;
  background: linear-gradient(#fff 0, #fff 45%, #e6eaeb);
}
.group { flex: none; display: flex; flex-direction: column; border-right: 1px solid #cfd3d5; }
.g-second { flex: 1; border-right: 0; }
.tools { display: grid; height: 66px; }
.g-select .tools { grid-template-columns: 29px 88px; }
.g-cad .tools { grid-template-columns: 75px 101px; padding: 0 0 0 8px; }
.g-common .tools { grid-template-columns: 63px 106px 86px; padding: 0 0 0 8px; }
.g-modify .tools { grid-template-columns: 52px 52px 51px 62px; padding: 0 0 0 8px; }
.g-draw .tools { grid-template-columns: 42px 46px 25px; }
.g-ident .tools { grid-template-columns: 52px 98px 88px; }
.g-second .tools { grid-template-columns: 58px 83px 98px 85px 94px 72px; }
.col { display: flex; flex-direction: column; }
.ribbon button { display: flex; align-items: center; gap: 2px; height: 22px; white-space: nowrap; }
.ribbon button .car { margin-left: 2px; }
.ribbon .big { flex-direction: column; justify-content: flex-start; height: 65px; padding-top: 4px; gap: 4px; }
.ribbon .big .car { margin: 1px 0 0; }
.ribbon .active { width: 24px; padding-top: 2px; padding-right: 10px; gap: 2px; background: #c6d9f0; }
.g-draw .big { padding-left: 4px; }
.g-draw .big:first-child { padding-left: 9px; }
.g-ident .big { padding-left: 2px; }
.g-second .big { padding-left: 0; }
.ribbon button:disabled { color: #b3b3b3; }
.ribbon .tick { padding-left: 1px; }
.caption { display: flex; align-items: center; justify-content: center; height: 22px; padding-top: 1px; }
.caption .car { width: 8px; height: 5px; margin-left: 6px; }
.g-select .caption { padding-right: 22px; }
.g-ident .caption { padding-top: 4px; }

/* drop-down row */
.pickers { flex: none; display: flex; gap: 2px; height: 26px; padding: 3px 0 1px; background: #c9ccd0; border-bottom: 1px solid #9ea3a8; }
.combo { position: relative; width: 94px; height: 21px; background: #fff; border: 1px solid #aaadb1; }
.combo:first-child { margin-left: -20px; }
.combo::after { content: ""; position: absolute; right: 5px; top: 8px; border: 3px solid transparent; border-top: 4px solid #555; border-bottom: 0; }
.combo select { appearance: none; width: 100%; height: 19px; padding: 0 3px; }

/* workspace */
.work { flex: 1; min-height: 0; display: flex; background: #fff; }
.strip { flex: none; display: flex; justify-content: flex-end; align-items: center; height: 12px; padding-right: 5px; background: #d2d4d9; border-bottom: 1px solid #c6c8cc; }
.x { width: 7px; height: 7px; }

.nav { flex: none; width: 180px; display: flex; flex-direction: column; border-right: 1px solid #d0d2d5; }
.navtitle { flex: none; margin: 0; height: 20px; overflow: hidden; font-size: 12px; font-weight: 400; line-height: 20px; color: #777; background: #eee; border-bottom: 1px solid #c9c9c9; }
.navtitle span { display: block; margin-left: -15px; }
.navtools { flex: none; display: flex; justify-content: flex-end; align-items: center; gap: 4px; height: 28px; padding-right: 1px; background: #efefef; border-bottom: 1px solid #d5d5d5; }
.navtools button { width: 23px; height: 21px; display: grid; place-items: center; border: 1px solid #6fb0f5; border-radius: 3px; background: #e6f1fd; }
.navtools svg { width: 16px; height: 16px; }
.navbody { flex: 1; min-height: 0; display: flex; overflow: hidden; }
.cats { flex: 1; display: flex; flex-direction: column; padding-top: 2px; }
.cats li { flex: none; display: flex; align-items: center; height: 23px; padding-left: 1px; white-space: nowrap; }
.cats .sub { height: 20px; margin: 1px 55px 2px 17px; padding-left: 2px; gap: 6px; }
.cats .on { background: #c6d8ef; }
.vip { width: 29px; height: 10px; margin-left: 4px; background: #ffd45e; color: #a8842c; font: 700 8px/11px "Liberation Serif", serif; text-align: center; }
.track { flex: none; width: 14px; padding: 15px 3px 0 3px; }
.nav .track { padding-left: 2px; padding-right: 4px; }
.thumb { width: 8px; height: 100%; border-radius: 4px 4px 0 0; background: #cbcbcb; }

.side { flex: none; width: 554px; margin-left: 3px; display: flex; flex-direction: column; }
.parts { flex: none; height: 355px; display: flex; flex-direction: column; border: 1px solid #c3c5c8; border-top: 0; }
.ptabs { flex: none; display: flex; height: 22px; background: #eee; border-bottom: 1px solid #c9c9c9; }
.ptabs button { padding: 0 7px; color: #888; background: #e0e1e3; border: 1px solid #cfd0d2; border-top: 0; border-bottom: 0; }
.ptabs .on { color: #222; font-weight: 700; background: #eee; border-color: #eee; }
.ptools { flex: none; display: flex; gap: 7px; height: 27px; padding: 1px 0 0 5px; background: #eee; border-bottom: 2px solid #d9d9d9; }
.ptools button { display: flex; align-items: center; gap: 2px; white-space: nowrap; color: #333; }
.search { flex: none; display: flex; align-items: center; height: 18px; padding-right: 7px; border-bottom: 1px solid #c9c9c9; }
.search input { flex: 1; height: 17px; padding-left: 1px; }
.search input::placeholder { color: #7a7a7a; }
.magic { width: 10px; height: 10px; }
.tree { padding-top: 2px; }
.tree li { display: flex; align-items: center; gap: 6px; height: 23px; padding-left: 9px; }
.tw { width: 7px; height: 7px; }
.tree .l2 { padding-left: 28px; }
.tree .l3 { padding-left: 57px; }
.tree span { padding: 2px 18px 2px 3px; }
.tree .on { background: #b0c9eb; }

.props { flex: 1; min-height: 0; margin-top: 3px; display: flex; flex-direction: column; overflow: hidden; border: 1px solid #c3c5c8; border-bottom: 0; }
.props .ptabs { height: 21px; }
.gridwrap { flex: 1; min-height: 0; display: flex; overflow: hidden; }
.gridwrap table { flex: 1; height: 0; table-layout: fixed; border-collapse: collapse; }
.c-no { width: 21px; }
.c-name { width: 96px; }
.c-add { width: 39px; }
.gridwrap th, .gridwrap td { height: 20px; padding: 0 3px; line-height: 16px; white-space: nowrap; overflow: hidden; border: 1px solid #d6d6d6; border-top: 0; border-left: 0; }
.gridwrap th { padding: 0; font-weight: 400; text-align: center; color: #444; background: #eee; }
.gridwrap .key { color: #2a62f0; }
.gridwrap .ck { padding: 0; text-align: center; }
.ck input { appearance: none; display: block; width: 13px; height: 13px; margin: 0 auto; border: 1px solid #858585; border-radius: 2px; background: #fff; }
.rebar { display: inline-block; width: 10px; height: 12px; margin-left: 1px; }

.gutter { flex: none; width: 4px; display: flex; flex-direction: column; justify-content: flex-end; padding-bottom: 123px; }
.gutter button { height: 96px; background: #5f6b75; }
.gutter svg { width: 4px; height: 8px; }

.canvas { flex: 1; min-width: 0; width: 0; height: 100%; background: #000; }
.axis { fill: #fff; font: 16px "Noto Sans", sans-serif; text-anchor: middle; }
.cadtext { font: 100 40px "Roboto Condensed", Roboto, sans-serif; white-space: pre; }
.cadtext .mid { font-size: 38px; }
.cadtext .small { font-size: 36px; }

/* annotation arrow over the window */
.pointer { position: absolute; left: 1268px; top: 66px; width: 220px; height: 400px; pointer-events: none; }
```
